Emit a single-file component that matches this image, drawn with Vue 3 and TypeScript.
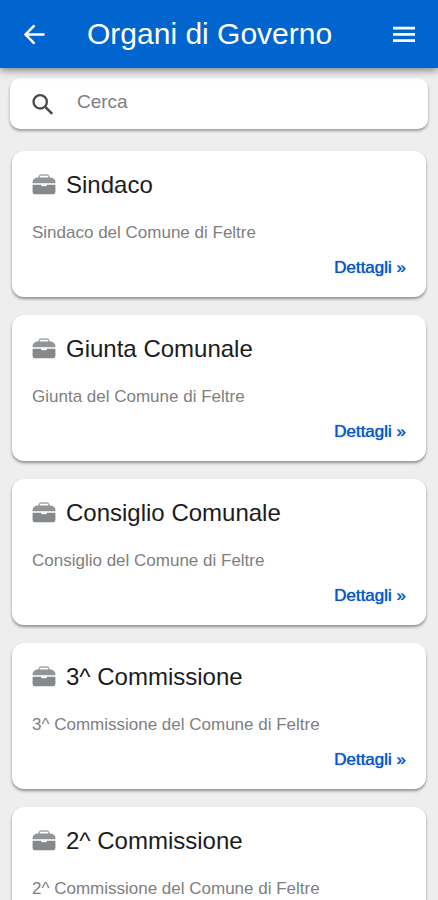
<script setup lang="ts">
import { ref, computed } from 'vue'

interface Organ {
  id: number
  name: string
  description: string
}

const organs: Organ[] = [
  'Sindaco',
  'Giunta Comunale',
  'Consiglio Comunale',
  '3^ Commissione',
  '2^ Commissione',
].map((name, id) => ({
  id,
  name,
  description: `${name.replace(' Comunale', '')} del Comune di Feltre`,
}))

const query = ref('')

const visible = computed<Organ[]>(() => {
  const q = query.value.trim().toLowerCase()
  return organs.filter((o) => o.name.toLowerCase().includes(q))
})
</script>

<template>
  <div class="page">
    <header class="bar">
      <button class="icon-button" type="button" aria-label="Indietro">
        <svg width="22" height="22" viewBox="0 0 22 22" aria-hidden="true">
          <path d="M21.5 11.5H3M11.5 2.3l-9 9.2 9 9.2" fill="none" stroke="currentColor" stroke-width="2.5" />
        </svg>
      </button>
      <h1 class="title">Organi di Governo</h1>
      <button class="icon-button" type="button" aria-label="Menu">
        <svg width="24" height="18" viewBox="0 0 24 18" aria-hidden="true">
          <path d="M1 3.2h22M1 9.400h22M1 15.600h22" fill="none" stroke="currentColor" stroke-width="2.700" />
        </svg>
      </button>
    </header>

    <main class="content">
      <label class="search">
        <svg class="search-icon" width="22" height="22" viewBox="0 0 22 22" aria-hidden="true">
          <circle cx="8.2" cy="8.800" r="6.700" fill="none" stroke="currentColor" stroke-width="2.300" />
          <path d="m13 13.600 7.200 7.200" fill="none" stroke="currentColor" stroke-width="2.600" />
        </svg>
        <input v-model="query" class="search-input" type="search" placeholder="Cerca" aria-label="Cerca" />
      </label>

      <ul class="list">
        <li v-for="organ in visible" :key="organ.id" class="card">
          <h2 class="card-title">
            <svg width="24" height="22" viewBox="0 0 24 22" aria-hidden="true">
              <path
                d="M6.500 4 7.300 2.200Q7.800 1 9 1h6q1.200 0 1.700 1.200l.8 1.800"
                fill="none"
                stroke="#a5a8aa"
                stroke-width="1.500"
              />
              <path d="M.6 9.300V7.700Q.6 6.500 1.600 5.600L3 4.300Q3.900 3.400 5.200 3.400h13.600q1.300 0 2.200.9l1.400 1.300q1 .9 1 2.100V9.300z" fill="#919496" />
              <path
                d="M.6 10.800h8.600v.4q0 1 1 1h3.600q1 0 1-1v-.4h8.600v7.200q0 2.300-2.300 2.300H2.900Q.6 20.300 .6 18z"
                fill="#85898b"
              />
            </svg>
            <span>{{ organ.name }}</span>
          </h2>
          <p class="description">{{ organ.description }}</p>
          <a class="details" href="#">Dettagli »</a>
        </li>
      </ul>
    </main>
  </div>
</template>

<style>
body {
  margin: 0;
  background: #eeeeee;
}
</style>

<style scoped>
.page {
  height: 100vh;
  display: flex;
  flex-direction: column;
  overflow: hidden;
  background: #eeeeee;
  color: #1c1c1c;
  font-family: 'Liberation Sans', Arial, sans-serif;
}

.bar {
  z-index: 1;
  flex: none;
  display: flex;
  align-items: center;
  gap: 29px;
  height: 68px;
  padding: 0 10px;
  background: #0065ce;
  color: #ffffff;
  box-shadow: 0 2px 8px rgba(0, 0, 0, 0.5);
}

.icon-button {
  flex: none;
  display: flex;
  align-items: center;
  justify-content: center;
  width: 48px;
  height: 48px;
  padding: 0;
  border: 0;
  background: none;
  color: inherit;
  cursor: pointer;
}

.title {
  flex: 1;
  margin: 0;
  font-size: 30px;
  line-height: 36px;
  font-weight: 400;
  white-space: nowrap;
}

.content {
  flex: 1;
  min-height: 0;
  overflow: hidden;
  padding: 10px 10px 0;
}

.search {
  display: flex;
  align-items: center;
  gap: 23px;
  height: 51px;
  padding: 0 22px;
  border-radius: 10px;
  background: #ffffff;
  box-shadow: 0 2px 3px rgba(0, 0, 0, 0.35);
}

.search-icon {
  flex: none;
  color: #4a4a4a;
}

.search-input {
  flex: 1;
  min-width: 0;
  padding: 0 0 3px;
  border: 0;
  outline: 0;
  background: transparent;
  color: #1c1c1c;
  font: 19px/24px 'Liberation Sans', Arial, sans-serif;
}

.search-input::placeholder {
  color: #808080;
  opacity: 1;
}

.list {
  display: flex;
  flex-direction: column;
  gap: 18px;
  margin: 22px 2px 0;
  padding: 0;
  list-style: none;
}

.card {
  display: flex;
  flex-direction: column;
  padding: 19px 20px;
  border-radius: 12px;
  background: #ffffff;
  box-shadow: 0 2px 3px rgba(0, 0, 0, 0.4);
}

.card-title {
  display: flex;
  align-items: center;
  gap: 10px;
  margin: 0;
  font-size: 24px;
  line-height: 30px;
  font-weight: 400;
}

.description {
  margin: 23px 0 0;
  color: #808080;
  font-size: 17px;
  line-height: 20px;
}

.details {
  align-self: flex-end;
  margin-top: 15px;
  color: #0b57c4;
  font-size: 17px;
  line-height: 20px;
  text-decoration: none;
  text-shadow: 0 0 1px #0b57c4;
}
</style>
